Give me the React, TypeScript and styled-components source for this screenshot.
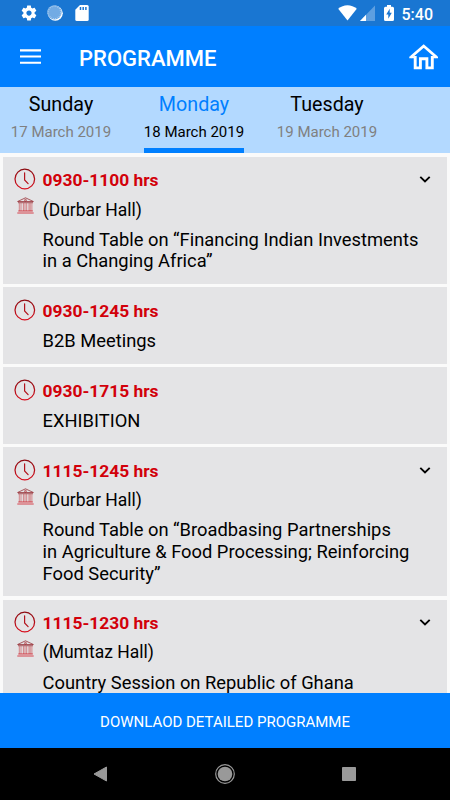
import React from "react";
import styled, { createGlobalStyle } from "styled-components";

const GlobalStyle = createGlobalStyle`
  *, *::before, *::after { box-sizing: border-box; }
  body { margin: 0; background: #fafafa; }
  svg { display: block; flex: none; }
`;

const Screen = styled.div`
  width: 450px;
  height: 800px;
  display: flex;
  flex-direction: column;
  overflow: hidden;
  background: #fafafa;
  color: #000;
  font-family: Roboto, "Liberation Sans", sans-serif;
`;

const StatusBar = styled.div`
  flex: none;
  height: 26px;
  padding: 0 17px 0 19.5px;
  display: flex;
  align-items: center;
  justify-content: space-between;
  background: #1976d2;
`;

const StatusGroup = styled.div<{ $gap: number }>`
  display: flex;
  align-items: center;
  gap: ${(p) => p.$gap}px;
`;

const StatusTime = styled.span`
  margin-left: 4px;
  font-size: 16px;
  font-weight: 500;
  line-height: 26px;
  color: #fff;
  padding-top: 3px;
  height: 28px;
`;

const AppBar = styled.header`
  flex: none;
  height: 61px;
  padding: 0 12px 0 20px;
  display: flex;
  align-items: center;
  background: #007fff;
`;

const AppTitle = styled.h1`
  flex: 1;
  margin: 0;
  padding: 5px 0 0 38px;
  font-size: 22px;
  font-weight: 500;
  line-height: 28px;
  color: #fff;
`;

const IconButton = styled.button`
  display: flex;
  padding: 0;
  border: 0;
  background: none;
`;

const Tabs = styled.nav`
  flex: none;
  height: 66px;
  padding-left: 11px;
  display: flex;
  gap: 33px;
  background: #b3d9ff;
`;

const Tab = styled.div<{ $active?: boolean }>`
  width: 100px;
  height: 66px;
  padding-top: 6px;
  display: flex;
  flex-direction: column;
  align-items: center;
  border-bottom: 5px solid ${(p) => (p.$active ? "#007fff" : "transparent")};
  color: ${(p) => (p.$active ? "#007fff" : "#000")};
`;

const Day = styled.span`
  font-size: 19.7px;
  line-height: 24px;
  white-space: nowrap;
`;

const DateLabel = styled.span<{ $active?: boolean }>`
  margin-top: 5px;
  font-size: 15px;
  line-height: 20px;
  white-space: nowrap;
  color: ${(p) => (p.$active ? "#000" : "#808080")};
`;

const List = styled.main`
  flex: 1;
  min-height: 0;
  overflow: hidden;
  padding: 3.75px 3px 0;
  display: flex;
  flex-direction: column;
  gap: 3.75px;
`;

const Card = styled.article`
  flex: none;
  padding: 11.5px 16px 11.5px 11px;
  background: #e4e4e6;
`;

const TimeRow = styled.div`
  display: flex;
  align-items: center;
  height: 22px;
`;

const Time = styled.span`
  flex: 1;
  padding: 2px 0 0 6.5px;
  font-size: 17.4px;
  font-weight: 700;
  line-height: 22px;
  color: #d2000a;
`;

const VenueRow = styled.div`
  display: flex;
  padding: 7px 0 0 3px;
  height: 29px;
`;

const Venue = styled.span`
  padding: 2.3px 0 0 8.7px;
  font-size: 17.5px;
  line-height: 21px;
`;

const Session = styled.p`
  margin: 0;
  padding: 9.5px 0 0 28.6px;
  font-size: 18.33px;
  line-height: 21.7px;
  white-space: pre-line;
`;

const DownloadButton = styled.button`
  flex: none;
  height: 55px;
  border: 0;
  padding: 2px 0 0;
  background: #007fff;
  color: #fff;
  font-family: inherit;
  font-size: 15px;
  text-align: center;
`;

const NavBar = styled.footer`
  flex: none;
  height: 52px;
  padding: 0 94px 1px 93px;
  display: flex;
  align-items: center;
  justify-content: space-between;
  background: #000;
`;

const Gear = () => (
  <svg width="18" height="18" viewBox="0 0 24 24" fill="#fff">
    <path d="M19.43 12.98c.04-.32.07-.64.07-.98s-.03-.66-.07-.98l2.11-1.65c.19-.15.24-.42.12-.64l-2-3.46c-.12-.22-.39-.3-.61-.22l-2.49 1c-.52-.4-1.08-.73-1.69-.98l-.38-2.65C14.46 2.18 14.25 2 14 2h-4c-.25 0-.46.18-.49.42l-.38 2.65c-.61.25-1.17.59-1.69.98l-2.49-1c-.23-.09-.49 0-.61.22l-2 3.46c-.13.22-.07.49.12.64l2.11 1.65c-.04.32-.07.65-.07.98s.03.66.07.98l-2.11 1.65c-.19.15-.24.42-.12.64l2 3.46c.12.22.39.3.61.22l2.49-1c.52.4 1.08.73 1.69.98l.38 2.65c.03.24.24.42.49.42h4c.25 0 .46-.18.49-.42l.38-2.65c.61-.25 1.17-.59 1.69-.98l2.49 1c.23.09.49 0 .61-.22l2-3.46c.12-.22.07-.49-.12-.64l-2.11-1.65zM12 15.5c-1.93 0-3.5-1.57-3.5-3.5s1.57-3.5 3.5-3.5 3.5 1.57 3.5 3.5-1.57 3.5-3.5 3.5z" />
  </svg>
);

const Sync = () => (
  <svg width="16" height="16" viewBox="0 0 16 16">
    <circle cx="8.3" cy="8.3" r="7.5" fill="#fff" />
    <circle cx="7.4" cy="7.4" r="7.2" fill="#72abe4" />
    <circle cx="7.4" cy="7.4" r="6.3" fill="none" stroke="#a9cdf0" strokeWidth="1.2" strokeDasharray="1 1" />
  </svg>
);

const SdCard = () => (
  <svg width="14" height="16" viewBox="0 0 14 16">
    <path d="M5 0h7.2A1.5 1.5 0 0 1 13.700 1.500v13A1.500 1.500 0 0 1 12.200 16H1.800A1.500 1.500 0 0 1 .3 14.500V4.700z" fill="#fff" />
    <path d="M5.500 2v3M8.200 2v3M10.900 2v3" stroke="#1976d2" strokeWidth="1.500" />
  </svg>
);

const Wifi = () => (
  <svg width="19" height="16" viewBox="0 0 19 16">
    <path d="M9.500 15.600.2 3.800Q4.300.2 9.500.2t9.300 3.600z" fill="#fff" />
  </svg>
);

const Signal = () => (
  <svg width="15" height="16" viewBox="0 0 15 16">
    <path d="M15 .5V16H0z" fill="#5e9fe0" />
    <path d="M6 9.800V16H0z" fill="#fff" />
  </svg>
);

const Battery = () => (
  <svg width="10" height="16" viewBox="0 0 10 16">
    <path d="M3 0h4v1.700h1.500q1.500 0 1.500 1.500v11.300Q10 16 8.500 16h-7Q0 16 0 14.500V3.200q0-1.500 1.500-1.500H3z" fill="#fff" />
    <path d="M5.700 3.700v4h2.100l-3.500 6V9.500H2.200z" fill="#1976d2" />
  </svg>
);

const Menu = () => (
  <svg width="21" height="15" viewBox="0 0 21 15" fill="#fff">
    <path d="M0 .3h21v2.100H0zM0 6.500h21v2.100H0zM0 12.700h21v2.100H0z" />
  </svg>
);

const Home = () => (
  <svg width="29" height="26" viewBox="0 0 29 26" fill="none" stroke="#fff">
    <path d="M1.800 13.300 14.700 2 27.600 13.300" strokeWidth="2.800" />
    <path d="M.3 13.300h5.800M23.200 13.300h5.800" strokeWidth="1.800" />
    <path d="M6.200 12v11.900h5.200V14.700h6.500v9.200h5.400V12" strokeWidth="2.900" />
  </svg>
);

const Clock = () => (
  <svg width="22" height="22" viewBox="0 0 22 22" fill="none" strokeLinecap="round">
    <defs>
      <linearGradient id="clock-red" x1="0" y1="0" x2="0" y2="1">
        <stop offset="0" stopColor="#8c0c12" />
        <stop offset="1" stopColor="#d80d1c" />
      </linearGradient>
    </defs>
    <circle cx="10.800" cy="11" r="9.800" stroke="url(#clock-red)" strokeWidth="1.250" />
    <path d="M10.600 4.800v7.100l3.500 3.700" stroke="#b3141d" strokeWidth="1.200" />
  </svg>
);

const Hall = () => (
  <svg width="17" height="17" viewBox="0 0 17 17" fill="none">
    <path d="M.6 4.500 8.500.8l7.900 3.700zM1 5.700h15" stroke="#942a30" strokeWidth=".75" />
    <circle cx="8.500" cy="3.200" r=".9" stroke="#a92028" strokeWidth=".7" />
    <path d="M2.300 6v8M4 6v8M6.400 6v8M8 6v8M9.700 6v8M12 6v8M13.200 6v8M14.900 6v8" stroke="#c64148" strokeWidth=".6" />
    <path d="M1.300 14h14.500M.3 16h16.400" stroke="#d01825" strokeWidth=".8" />
  </svg>
);

const Chevron = () => (
  <svg width="12" height="22" viewBox="0 0 12 22" fill="none">
    <path d="M1.300 8.900 6 13.500l4.700-4.600" stroke="#000" strokeWidth="1.900" />
  </svg>
);

const days = [
  { day: "Sunday", date: "17 March 2019" },
  { day: "Monday", date: "18 March 2019", active: true },
  { day: "Tuesday", date: "19 March 2019" },
];

const sessions = [
  {
    time: "0930-1100 hrs",
    venue: "(Durbar Hall)",
    title: "Round Table on “Financing Indian Investments\nin a Changing Africa”",
  },
  { time: "0930-1245 hrs", title: "B2B Meetings" },
  { time: "0930-1715 hrs", title: "EXHIBITION" },
  {
    time: "1115-1245 hrs",
    venue: "(Durbar Hall)",
    title:
      "Round Table on “Broadbasing Partnerships\nin Agriculture & Food Processing; Reinforcing\nFood Security”",
  },
  {
    time: "1115-1230 hrs",
    venue: "(Mumtaz Hall)",
    title: "Country Session on Republic of Ghana",
  },
];

export default function App() {
  return (
    <>
      <GlobalStyle />
      <Screen>
        <StatusBar>
          <StatusGroup $gap={11.5}>
            <StatusGroup $gap={9.5}>
              <Gear />
              <Sync />
            </StatusGroup>
            <SdCard />
          </StatusGroup>
          <StatusGroup $gap={9}>
            <StatusGroup $gap={2.5}>
              <Wifi />
              <Signal />
            </StatusGroup>
            <StatusGroup $gap={4}>
              <Battery />
              <StatusTime>5:40</StatusTime>
            </StatusGroup>
          </StatusGroup>
        </StatusBar>
        <AppBar>
          <IconButton aria-label="Menu">
            <Menu />
          </IconButton>
          <AppTitle>PROGRAMME</AppTitle>
          <IconButton aria-label="Home">
            <Home />
          </IconButton>
        </AppBar>
        <Tabs>
          {days.map((d) => (
            <Tab key={d.day} $active={d.active}>
              <Day>{d.day}</Day>
              <DateLabel $active={d.active}>{d.date}</DateLabel>
            </Tab>
          ))}
        </Tabs>
        <List>
          {sessions.map((s) => (
            <Card key={s.time}>
              <TimeRow>
                <Clock />
                <Time>{s.time}</Time>
                {s.venue && <Chevron />}
              </TimeRow>
              {s.venue && (
                <VenueRow>
                  <Hall />
                  <Venue>{s.venue}</Venue>
                </VenueRow>
              )}
              <Session>{s.title}</Session>
            </Card>
          ))}
        </List>
        <DownloadButton>DOWNLAOD DETAILED PROGRAMME</DownloadButton>
        <NavBar>
          <svg width="14" height="16" viewBox="0 0 14 16">
            <path d="M13.500 1v14L1 8z" fill="#999" stroke="#999" strokeLinejoin="round" />
          </svg>
          <svg width="20" height="20" viewBox="0 0 20 20">
            <circle cx="10" cy="10" r="9.300" fill="none" stroke="#999" strokeWidth="1.200" />
            <circle cx="10" cy="10" r="7.300" fill="#999" />
          </svg>
          <svg width="14" height="14" viewBox="0 0 14 14">
            <rect width="14" height="14" rx=".8" fill="#999" />
          </svg>
        </NavBar>
      </Screen>
    </>
  );
}
